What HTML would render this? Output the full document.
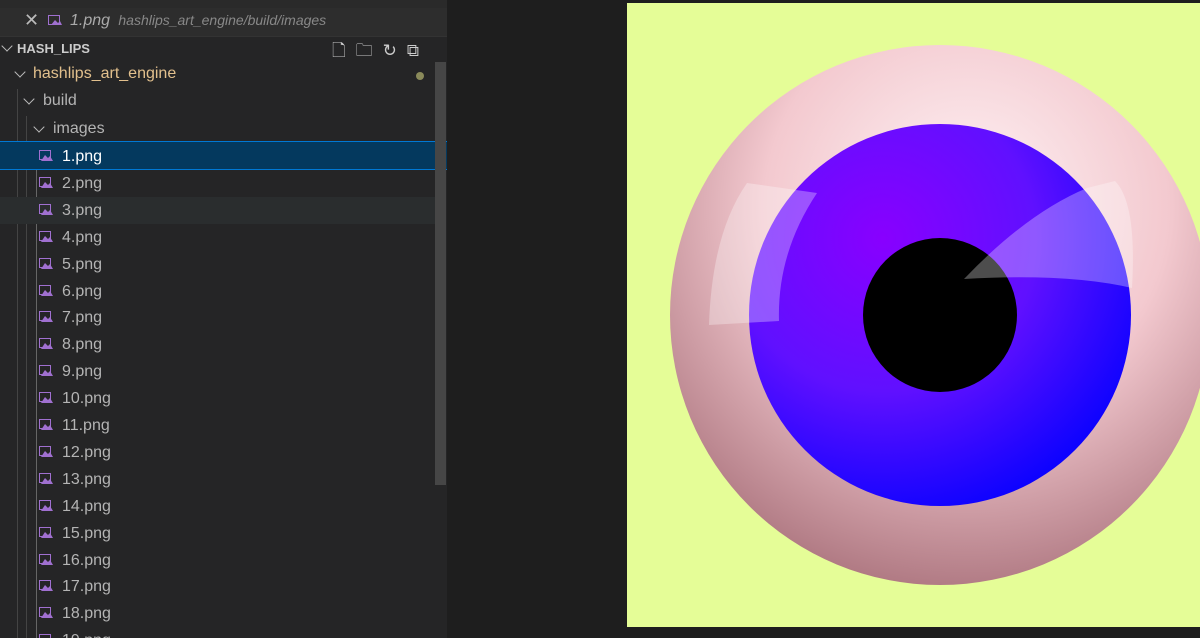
<!DOCTYPE html><html><head><style>
html,body{margin:0;width:1200px;height:638px;overflow:hidden}
body{background:#1e1e1e;position:relative;font-family:"Liberation Sans",sans-serif}
#side{position:absolute;left:0;top:0;width:447px;height:638px;background:#252526;overflow:hidden}
.r{position:absolute;left:0;width:435px;height:27px;line-height:27px;font-size:16px;color:#b4b4b4}
.ic{position:absolute;left:39px;top:7px;width:14px;height:12px}
.t{position:absolute;left:62px}
.vl{position:absolute;width:1px;background:#444}
.ch{position:absolute;width:7px;height:7px;border-right:1.5px solid #bbb;border-bottom:1.5px solid #bbb;transform:rotate(45deg)}
</style></head><body>
<div id="side">
<div style="position:absolute;left:0;top:0;width:447px;height:8px;background:#2a2a2a"></div>
<div style="position:absolute;left:0;top:8px;width:447px;height:28px;background:#2d2d2d;border-bottom:1px solid #333"></div>
<div style="position:absolute;left:24px;top:10px;color:#bbb;font-size:18px">✕</div>
<svg style="position:absolute;left:48px;top:15px" width="14" height="12"><rect x="0.5" y="0.5" width="11" height="9" fill="none" stroke="#a070d0"/><path d="M3 10 L7 5 L10 8 L12 6 L14 10Z" fill="#a070d0"/></svg>
<div style="position:absolute;left:70px;top:12px;font-size:16px;font-style:italic;color:#aaa">1.png <span style="font-size:14px;color:#888">&nbsp;hashlips_art_engine/build/images</span></div>
<div class="ch" style="left:3px;top:42px"></div>
<div style="position:absolute;left:17px;top:41px;font-size:13px;font-weight:bold;color:#ccc">HASH_LIPS</div>
<div style="position:absolute;left:332px;top:38px;color:#ccc;font-size:17px;letter-spacing:10px">🗋🗀↻⧉</div>
<div class="ch" style="left:16px;top:68px"></div>
<div style="position:absolute;left:33px;top:65px;font-size:16px;color:#e2c08d">hashlips_art_engine</div>
<div style="position:absolute;left:416px;top:72px;width:8px;height:8px;border-radius:50%;background:#8a8a5a"></div>
<div class="ch" style="left:25px;top:95px"></div>
<div style="position:absolute;left:43px;top:92px;font-size:16px;color:#b4b4b4">build</div>
<div class="ch" style="left:35px;top:123px"></div>
<div style="position:absolute;left:53px;top:120px;font-size:16px;color:#b4b4b4">images</div>
<div class="vl" style="left:17px;top:89px;height:549px"></div>
<div class="vl" style="left:26px;top:116px;height:522px"></div>
<div class="vl" style="left:36px;top:143px;height:495px;background:#666"></div>
<div style="position:absolute;left:0;top:141px;width:447px;height:29px;background:#04395e;border-top:1px solid #0078d4;border-bottom:1px solid #0078d4;box-sizing:border-box"></div>
<div style="position:absolute;left:0;top:197px;width:435px;height:27px;background:#2a2d2e"></div>
<div id="rows"></div>
<div style="position:absolute;left:435px;top:62px;width:11px;height:423px;background:#464646"></div>
</div>
<div style="position:absolute;left:627px;top:3px;width:573px;height:624px;background:#e5fd97;overflow:hidden">
<svg width="573" height="624" style="position:absolute;left:0;top:0">
<defs>
<radialGradient id="w" cx="0.55" cy="0.3" r="0.75"><stop offset="0" stop-color="#fff4f6"/><stop offset="0.5" stop-color="#f3c9cf"/><stop offset="1" stop-color="#a8707a"/></radialGradient>
<radialGradient id="i" cx="0.35" cy="0.3" r="0.8"><stop offset="0" stop-color="#8800ff"/><stop offset="0.5" stop-color="#6010ff"/><stop offset="1" stop-color="#0000ff"/></radialGradient>
</defs>
<circle cx="313" cy="312" r="270" fill="url(#w)"/>
<circle cx="313" cy="312" r="191" fill="url(#i)"/>
<circle cx="313" cy="312" r="77" fill="#000"/>
<path d="M337 276 Q400 210 460 185 L488 178 Q510 200 505 285 Q440 270 337 276Z" fill="#fff" opacity="0.3"/>
<path d="M82 322 Q85 230 120 180 L190 190 Q150 250 152 318Z" fill="#fff" opacity="0.3"/>
</svg></div>
<script>
var h='';for(var n=1;n<=19;n++){var y=143+(n-1)*26.9;h+='<div class="r" style="top:'+y+'px;'+(n==1?'color:#fff':'')+'"><svg class="ic" viewBox="0 0 14 12"><rect x="0.5" y="0.5" width="11" height="9" fill="none" stroke="#a070d0"/><path d="M2 11 L6 5 L9 8 L11 6 L14 11Z" fill="#a070d0"/></svg><span class="t">'+n+'.png</span></div>';}
document.getElementById('rows').innerHTML=h;
</script>
</body></html>
